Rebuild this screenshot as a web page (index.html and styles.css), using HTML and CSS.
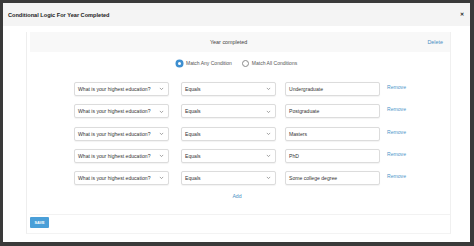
FILE: index.html
```html
<!DOCTYPE html>
<html>
<head>
<meta charset="utf-8">
<link rel="stylesheet" href="styles.css">
</head>
<body>
<div class="modal">
  <div class="modal-header">
    <span class="modal-title">Conditional Logic For Year Completed</span>
    <span class="close">&#x2715;</span>
  </div>
  <div class="modal-body">
    <div class="panel">
      <div class="panel-head">
        <span class="panel-title">Year completed</span>
        <a class="delete">Delete</a>
      </div>
      <div class="radios">
        <label class="radio"><span class="dot on"></span>Match Any Condition</label>
        <label class="radio"><span class="dot"></span>Match All Conditions</label>
      </div>
      <div class="rows">
        <div class="row">
          <div class="select wide"><span>What is your highest education?</span><svg viewBox="0 0 6 4"><polyline points="1,1 3,3 5,1"/></svg></div>
          <div class="select"><span>Equals</span><svg viewBox="0 0 6 4"><polyline points="1,1 3,3 5,1"/></svg></div>
          <div class="input">Undergraduate</div>
          <a class="remove">Remove</a>
        </div>
        <div class="row">
          <div class="select wide"><span>What is your highest education?</span><svg viewBox="0 0 6 4"><polyline points="1,1 3,3 5,1"/></svg></div>
          <div class="select"><span>Equals</span><svg viewBox="0 0 6 4"><polyline points="1,1 3,3 5,1"/></svg></div>
          <div class="input">Postgraduate</div>
          <a class="remove">Remove</a>
        </div>
        <div class="row">
          <div class="select wide"><span>What is your highest education?</span><svg viewBox="0 0 6 4"><polyline points="1,1 3,3 5,1"/></svg></div>
          <div class="select"><span>Equals</span><svg viewBox="0 0 6 4"><polyline points="1,1 3,3 5,1"/></svg></div>
          <div class="input">Masters</div>
          <a class="remove">Remove</a>
        </div>
        <div class="row">
          <div class="select wide"><span>What is your highest education?</span><svg viewBox="0 0 6 4"><polyline points="1,1 3,3 5,1"/></svg></div>
          <div class="select"><span>Equals</span><svg viewBox="0 0 6 4"><polyline points="1,1 3,3 5,1"/></svg></div>
          <div class="input">PhD</div>
          <a class="remove">Remove</a>
        </div>
        <div class="row">
          <div class="select wide"><span>What is your highest education?</span><svg viewBox="0 0 6 4"><polyline points="1,1 3,3 5,1"/></svg></div>
          <div class="select"><span>Equals</span><svg viewBox="0 0 6 4"><polyline points="1,1 3,3 5,1"/></svg></div>
          <div class="input">Some college degree</div>
          <a class="remove">Remove</a>
        </div>
      </div>
      <div class="add-line"><a class="add">Add</a></div>
      <div class="footer">
        <button class="save">SAVE</button>
      </div>
    </div>
  </div>
</div>
</body>
</html>
```

FILE: styles.css
```css
* { box-sizing: border-box; }
html, body { margin: 0; padding: 0; }
body {
  width: 474px;
  height: 246px;
  background: #3a3a3a;
  padding: 3px 4px 4px 3px;
  font-family: "Liberation Sans", Arial, sans-serif;
  color: #333;
  overflow: hidden;
}
.modal {
  width: 467px;
  height: 239px;
  background: #fff;
  display: flex;
  flex-direction: column;
}
.modal-header {
  height: 23px;
  background: #f4f4f4;
  display: flex;
  align-items: center;
  justify-content: space-between;
  padding: 0 6px 0 5px;
}
.modal-title {
  font-size: 5.6px;
  font-weight: bold;
  color: #222;
}
.close {
  font-size: 4.5px;
  font-weight: bold;
  color: #222;
}
.modal-body {
  padding: 6px 19px 0 23px;
}
.panel {
  height: 202px;
  border-left: 1px solid #eeeeee;
  border-right: 1px solid #f0f0f0;
  border-bottom: 1px solid #f3f3f3;
  padding-left: 3px;
  display: flex;
  flex-direction: column;
}
.panel-head {
  height: 20px;
  background: #f8f8f8;
  display: flex;
  align-items: center;
  padding-left: 180px;
  padding-right: 7px;
  font-size: 5.4px;
}
.panel-title { color: #444; }
.delete {
  margin-left: auto;
  color: #4a8fc4;
}
.radios {
  margin-top: 6px;
  height: 10px;
  display: flex;
  align-items: center;
  padding-left: 146px;
  gap: 10px;
  font-size: 5px;
  color: #555;
}
.radio { display: flex; align-items: center; gap: 3px; }
.dot {
  width: 7px;
  height: 7px;
  border-radius: 50%;
  border: 1px solid #8a8a8a;
  background: #fff;
}
.dot.on {
  border: 2px solid #3f8fd0;
  background: #fff;
  box-shadow: 0 0 0 0.5px #3f8fd0;
}
.rows {
  margin-top: 14px;
  padding-left: 44px;
  display: flex;
  flex-direction: column;
  gap: 8.25px;
}
.row {
  height: 14px;
  display: flex;
  align-items: center;
  font-size: 5.1px;
}
.select, .input {
  width: 95px;
  height: 14px;
  border: 1px solid #dcdcdc;
  border-radius: 2px;
  background: #fff;
  display: flex;
  align-items: center;
  padding: 0 3px;
  color: #333;
  box-shadow: 0 0.5px 1px rgba(0,0,0,0.05);
}
.select { justify-content: space-between; padding-right: 4px; }
.select svg {
  width: 5px;
  height: 3.5px;
  fill: none;
  stroke: #777;
  stroke-width: 0.8;
}
.select.wide { margin-right: 12px; }
.select + .select { margin-right: 9px; }
.remove {
  margin-left: 7px;
  color: #4e95c9;
  margin-top: -4px;
}
.add-line {
  margin-top: 8px;
  height: 8px;
  display: flex;
  justify-content: center;
  padding-right: 6px;
  font-size: 5.2px;
}
.add { color: #4a8fc4; }
.footer {
  margin-top: auto;
  border-top: 1px solid #f2f2f2;
  height: 19px;
  padding-top: 2px;
}
.save {
  width: 19px;
  height: 11px;
  border: none;
  border-radius: 1px;
  background: #4a9fd8;
  color: #fff;
  font-family: "Liberation Sans", Arial, sans-serif;
  font-size: 3.8px;
  font-weight: bold;
  padding: 0;
  display: block;
}
```
